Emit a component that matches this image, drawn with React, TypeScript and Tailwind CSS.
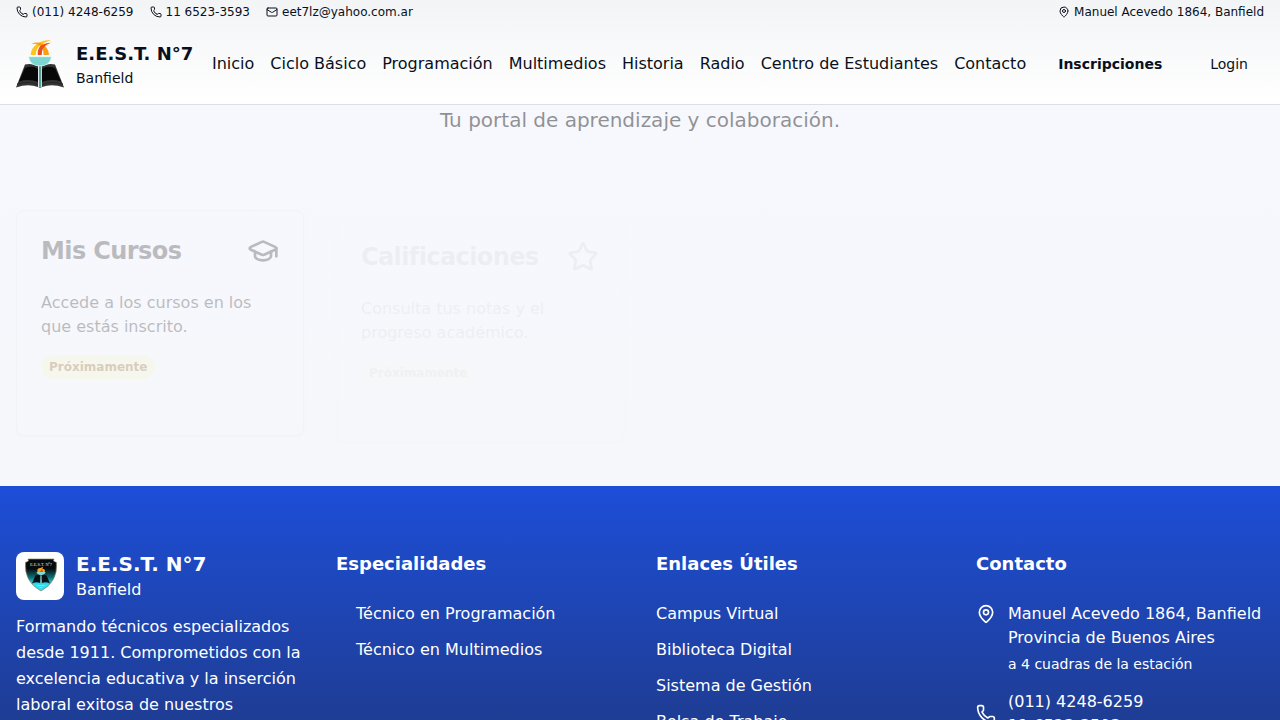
import type { ReactNode } from "react";
import { GraduationCap, Mail, MapPin, Phone, Star } from "lucide-react";

const navItems = ["Inicio", "Ciclo Básico", "Programación", "Multimedios", "Historia", "Radio", "Centro de Estudiantes", "Contacto"];
const links = ["Campus Virtual", "Biblioteca Digital", "Sistema de Gestión", "Bolsa de Trabajo"];

function TorchLogo() {
  return (
    <svg className="size-12 shrink-0" viewBox="0 0 48 48">
      <path d="M9 24.500Q17 23 24 27Q31 23 39 24.500L48 47.500Q36 43.500 26 47H22Q12 43.500 0 47.500Z" fill="#343434" />
      <path d="M9 28Q17 25 22 29V42Q13 38.500 3 41.500ZM39 28Q31 25 26 29V42Q35 38.500 45 41.500Z" fill="#080808" />
      <path d="M1 44Q13 40.500 22 44.500M47 44Q35 40.500 26 44.500" fill="none" stroke="#262626" strokeWidth="1" />
      <path d="M22 26H26V48H22Z" fill="#dce9e7" />
      <path d="M23 26H25.200V48H23Z" fill="#579f99" />
      <path d="M12.500 16.700H35.500Q34 26 24 26Q14 26 12.500 16.700Z" fill="#7dd5d1" stroke="#f1fafa" strokeWidth=".6" />
      <path d="M14.700 15Q15 8 21 4Q27-.5 35 .4Q28 2 24.500 5.500Q20 8 19.700 15Z" fill="#fdc51b" />
      <path d="M15 3.500Q25 .5 30 7Q32.500 10 33 15H27.500Q28 9 23 5.200Q20 3.300 15 3.500Z" fill="#f9a012" />
      <path d="M21.700 15Q21 7 27 4.500Q30 3 35 2.700Q29 5 27 8.500Q25.500 11 25.700 15Z" fill="#e9501b" />
    </svg>
  );
}

function ShieldLogo() {
  return (
    <svg className="-mt-0.5 ml-0.5 h-[34px] w-8.5" viewBox="0 0 34 34">
      <defs>
        <linearGradient id="shield" x1="0" y1="0" x2="0" y2="1">
          <stop offset="0.3" stopColor="#060a0b" />
          <stop offset="0.58" stopColor="#0f707a" />
          <stop offset="0.78" stopColor="#30dced" />
        </linearGradient>
      </defs>
      <path d="M4 1H30L29.500 3L32.500 4.500Q34 24 17 33Q0 24 1.500 4.500L4.500 3Z" fill="url(#shield)" stroke="#8c855f" strokeWidth=".7" />
      <text x="6" y="7.600" textLength="22" lengthAdjust="spacingAndGlyphs" fontSize="5" fill="#e4e4e4" className="font-['Liberation_Serif',serif]">E.E.S.T. Nº7</text>
      <path d="M13.500 14Q12.500 10 16.500 10L19 8.800L18.500 11Q21.500 10.500 20.800 14Z" fill="#fba51c" />
      <path d="M16 14L18 10.500L19 14Z" fill="#e34d1e" />
      <path d="M12.500 14H21.500Q21 17 17 17Q13 17 12.500 14Z" fill="#8bd8d6" />
      <path d="M11.500 17.500Q15 16 16.300 18V25Q12 23.500 8 25.500ZM22.500 17.500Q19 16 17.700 18V25Q22 23.500 26 25.500Z" fill="#071013" />
      <path d="M17 17.500V25" stroke="#c6e3e2" strokeWidth=".8" />
      <path d="M13 27.500H21M15.500 29.500H18.500" stroke="#9ceef4" strokeWidth=".6" />
    </svg>
  );
}

function Card({ title, text, icon, className }: { title: string; text: string; icon: ReactNode; className: string }) {
  return (
    <article className={`h-[226px] rounded-lg border border-gray-200 p-6 text-zinc-950 shadow-xs ${className}`}>
      <div className="flex h-8 items-center justify-between">
        <h2 className="text-2xl font-bold tracking-tight">{title}</h2>
        {icon}
      </div>
      <p className="mt-6 text-base">{text}</p>
      <span className="mt-4 inline-block rounded-full bg-[#f6fac0] px-2 py-1 text-xs font-semibold text-yellow-800">Próximamente</span>
    </article>
  );
}

export default function App() {
  return (
    <div className="flex h-[720px] flex-col overflow-hidden bg-[#f7f8fc] font-['DejaVu_Sans',sans-serif] text-[#09101b]">
      <header className="h-[105px] shrink-0 border-b border-[#d9dee8] bg-linear-to-b from-gray-100 to-white">
        <div className="flex h-6 items-center justify-between px-4 text-xs">
          <div className="flex items-center gap-4">
            <span className="flex items-center gap-1"><Phone className="size-3" />(011) 4248-6259</span>
            <span className="flex items-center gap-1"><Phone className="size-3" />11 6523-3593</span>
            <span className="flex items-center gap-1"><Mail className="size-3" />eet7lz@yahoo.com.ar</span>
          </div>
          <span className="flex items-center gap-1"><MapPin className="size-3" />Manuel Acevedo 1864, Banfield</span>
        </div>
        <div className="flex h-20 items-center px-4">
          <a className="flex items-center gap-3">
            <TorchLogo />
            <span className="whitespace-nowrap">
              <b className="block text-lg leading-7">E.E.S.T. N°7</b>
              <span className="block text-sm leading-5">Banfield</span>
            </span>
          </a>
          <nav className="ml-auto flex gap-4 whitespace-nowrap text-base">
            {navItems.map((item) => <a key={item}>{item}</a>)}
          </nav>
          <div className="ml-4 flex gap-4 text-sm">
            <button className="px-4 font-bold">Inscripciones</button>
            <button className="px-4">Login</button>
          </div>
        </div>
      </header>

      <main className="h-[381px] shrink-0 bg-linear-to-b from-[#f7f8fd] to-[#f5f7fb]">
        <p className="pt-px text-center text-xl text-zinc-950 opacity-[0.43]">Tu portal de aprendizaje y colaboración.</p>
        <div className="mt-[75.5px] grid grid-cols-4 gap-8 px-4">
          <Card title="Mis Cursos" text="Accede a los cursos en los que estás inscrito." icon={<GraduationCap className="size-8" />} className="opacity-[0.25]" />
          <Card title="Calificaciones" text="Consulta tus notas y el progreso académico." icon={<Star className="size-8" />} className="mt-1.5 opacity-[0.035]" />
        </div>
      </main>

      <footer className="grid h-[270px] shrink-0 grid-cols-4 gap-8 bg-linear-to-b from-[#1d4ed8] to-[#1e3a8a] px-4 pt-16 text-white">
        <section>
          <div className="flex items-center gap-3">
            <div className="flex size-12 items-center justify-center rounded-lg bg-white"><ShieldLogo /></div>
            <div>
              <h2 className="text-xl leading-7 font-bold">E.E.S.T. N°7</h2>
              <p>Banfield</p>
            </div>
          </div>
          <p className="mt-3 leading-[26px]">Formando técnicos especializados desde 1911. Comprometidos con la excelencia educativa y la inserción laboral exitosa de nuestros</p>
        </section>
        <section>
          <h2 className="text-lg leading-7 font-semibold">Especialidades</h2>
          <ul className="mt-6 space-y-3 pl-5"><li>Técnico en Programación</li><li>Técnico en Multimedios</li></ul>
        </section>
        <section>
          <h2 className="text-lg leading-7 font-semibold">Enlaces Útiles</h2>
          <ul className="mt-6 space-y-3">{links.map((link) => <li key={link}>{link}</li>)}</ul>
        </section>
        <section>
          <h2 className="text-lg leading-7 font-semibold">Contacto</h2>
          <div className="mt-6 flex gap-3">
            <MapPin className="mt-0.5 size-5 shrink-0" />
            <div className="whitespace-nowrap">
              <p>Manuel Acevedo 1864, Banfield</p>
              <p>Provincia de Buenos Aires</p>
              <p className="mt-1 text-sm">a 4 cuadras de la estación</p>
            </div>
          </div>
          <div className="mt-4 flex items-center gap-3">
            <Phone className="size-5 shrink-0" />
            <div><p>(011) 4248-6259</p><p>11 6523-3593</p></div>
          </div>
        </section>
      </footer>
    </div>
  );
}
